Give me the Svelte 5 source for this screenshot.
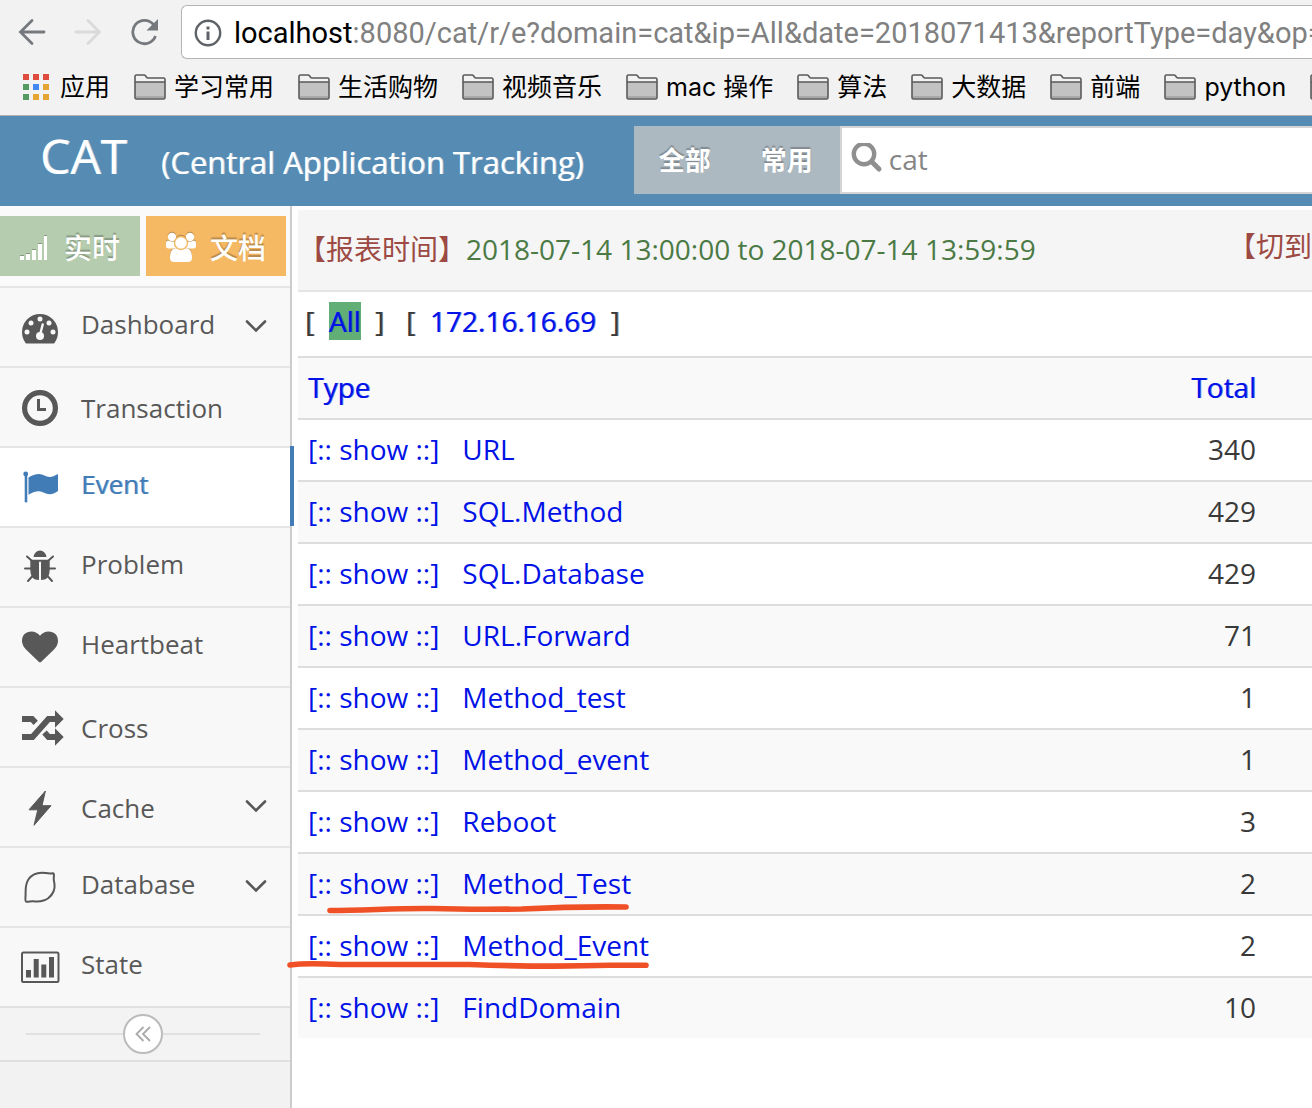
<script>
  const bookmarks = ['学习常用', '生活购物', '视频音乐', 'mac 操作', '算法', '大数据', '前端', 'python'];
  const appColors = ['red', 'red', 'red', 'green', 'blue', 'yellow', 'green', 'yellow', 'yellow'];

  const menu = [
    { name: 'Dashboard', icon: 'gauge', children: true },
    { name: 'Transaction', icon: 'clock', low: true },
    { name: 'Event', icon: 'flag', active: true },
    { name: 'Problem', icon: 'bug' },
    { name: 'Heartbeat', icon: 'heart' },
    { name: 'Cross', icon: 'shuffle', low: true },
    { name: 'Cache', icon: 'bolt', low: true, children: true },
    { name: 'Database', icon: 'leaf', children: true },
    { name: 'State', icon: 'chart' }
  ];

  const rows = [
    ['URL', 340],
    ['SQL.Method', 429],
    ['SQL.Database', 429],
    ['URL.Forward', 71],
    ['Method_test', 1],
    ['Method_event', 1],
    ['Reboot', 3],
    ['Method_Test', 2],
    ['Method_Event', 2],
    ['FindDomain', 10]
  ];
</script>

{#snippet folder()}
  <svg class="folder" width="32" height="26" viewBox="0 0 32 26" aria-hidden="true">
    <path d="M1 8h30v15.500a1.500 1.500 0 0 1-1.500 1.500h-27A1.500 1.500 0 0 1 1 23.500z" fill="#c2c2c2" />
    <path d="M2 22h28v2H2z" fill="#a9a9a9" />
    <path d="M1 8V2.500q0-1.500 1.500-1.500H10q1 0 1.500.8l1 1.400q.5.8 1.500.8h15.500q1.500 0 1.500 1.500V23.500q0 1.500-1.500 1.500h-27q-1.500 0-1.500-1.500zM1 8h30" fill="none" stroke="#5a5a5a" stroke-width="1.600" />
  </svg>
{/snippet}

{#snippet menuIcon(kind)}
  <svg class="menu-icon" width="48" height="44" viewBox="18 19 48 44" aria-hidden="true">
    {#if kind === 'gauge'}
      <path fill="currentColor" d="M25.500 57q-3.500-5-3.500-11a18 18 0 0 1 36 0q0 6-3.500 11-.5.5-1.200.5H26.700q-.7 0-1.200-.5z" />
      <g fill="#f8f8f8">
        <circle cx="27" cy="46" r="2.500" /><circle cx="31" cy="37" r="2.500" /><circle cx="40" cy="33" r="2.500" />
        <circle cx="49" cy="37" r="2.500" /><circle cx="53" cy="46" r="2.500" /><circle cx="40" cy="50" r="4" />
      </g>
      <path d="M40 49l2.700-10.500" stroke="#f8f8f8" stroke-width="2.400" stroke-linecap="round" />
    {:else if kind === 'clock'}
      <circle cx="40" cy="42" r="15.400" fill="none" stroke="currentColor" stroke-width="5.200" />
      <path fill="currentColor" d="M37 33h3v9h6v3h-9z" />
    {:else if kind === 'flag'}
      <circle cx="25.700" cy="28" r="2.400" fill="currentColor" />
      <path d="M26 28v27.300" stroke="currentColor" stroke-width="2.600" stroke-linecap="round" />
      <path fill="currentColor" d="M28.500 31.500q5-3.500 10.500-3.500c4 0 7 3 10.500 3 3.500 0 5.500-1.700 8.500-3v17c-2.500 1.500-5 3.200-8.500 3.200-4 0-7-3-10.500-3-4 0-7.500 1.800-10.500 3.500z" />
    {:else if kind === 'bug'}
      <path fill="currentColor" d="M33.700 31a6.300 6.500 0 0 1 12.600 0zM30.300 33.700h19.400V44q0 10-8.700 10V35.700h-2V54q-8.700 0-8.700-10z" />
      <path fill="none" stroke="currentColor" stroke-width="2" stroke-linecap="round" d="M27 30.500l4.500 4M53 30.500l-4.500 4M25 42.500h6M49 42.500h6M28 55l5-5.500M52 55l-5-5.500" />
    {:else if kind === 'heart'}
      <path fill="currentColor" d="M40 56.500q-.6 0-1-.4L26.500 44Q22 39.500 22 35c0-6 3.800-9.500 9.500-9.500 3.500 0 6.500 2 8.500 4.200 2-2.200 5-4.200 8.500-4.200 5.700 0 9.500 3.500 9.500 9.500q0 4.500-4.500 9L41 56.100q-.4.4-1 .4z" />
    {:else if kind === 'shuffle'}
      <g fill="none" stroke="currentColor" stroke-width="6">
        <path d="M22 33h10l3.700 3.800M22 51h10.500L48.500 33H56M44.500 46.500l4 4.500H56" />
      </g>
      <path fill="currentColor" d="M55 24.300l8.700 8.700-8.700 8.700zM55 42.300l8.700 8.700-8.700 8.700z" />
    {:else if kind === 'bolt'}
      <path fill="currentColor" stroke="currentColor" stroke-width="1" stroke-linejoin="round" d="M45.400 25L42 39.700h9L34 59.300 37.800 43.800H29z" />
    {:else if kind === 'leaf'}
      <path fill="none" stroke="currentColor" stroke-width="2" stroke-linejoin="round" d="M53 27.300q-4 .4-7-.2c-8-1.200-14 1.200-17.500 6.200-4 6-2.500 11-3 17.500-.2 2-.4 4.700 1 5 2 .4 4-.9 7-.6 5 .5 10 .8 15-3.200 5-4.200 6.500-10 6-14-.3-2.500-1-3.500-.7-6.500.1-2 .5-4.300-.8-4.200z" />
    {:else}
      <rect x="22" y="26.500" width="36.500" height="29.500" rx="1.500" fill="none" stroke="currentColor" stroke-width="2" />
      <path fill="currentColor" d="M26 44h5v7.500h-5zM33.700 33h5v18.500h-5zM41.300 38.500h5v13h-5zM49 31h5v20.500h-5z" />
    {/if}
  </svg>
{/snippet}

<div class="page">
  <div class="browser">
    <div class="toolbar">
      <button class="tool" aria-label="Back">
        <svg width="28" height="28" viewBox="0 0 28 28"><path d="M26 14H3M14 2.500L2.500 14 14 25.500" fill="none" stroke="#75787d" stroke-width="2.800" stroke-linecap="round" /></svg>
      </button>
      <button class="tool" aria-label="Forward" disabled>
        <svg width="28" height="28" viewBox="0 0 28 28"><path d="M2 14h23M14 2.500L25.500 14 14 25.500" fill="none" stroke="#d9dadb" stroke-width="2.800" stroke-linecap="round" /></svg>
      </button>
      <button class="tool" aria-label="Reload">
        <svg width="28" height="28" viewBox="0 0 28 28"><path d="M23.500 6.500A11.700 11.700 0 1 0 25.500 18" fill="none" stroke="#75787d" stroke-width="2.800" /><path d="M28 1v11.500H16.500z" fill="#75787d" /></svg>
      </button>
      <div class="address">
        <svg width="28" height="28" viewBox="0 0 28 28" aria-hidden="true"><circle cx="14" cy="14" r="12.200" fill="none" stroke="#5f6368" stroke-width="2.400" /><path d="M12.500 7.500h3v3h-3zM12.500 12.500h3V21h-3z" fill="#5f6368" /></svg>
        <label for="url">localhost</label>
        <input id="url" type="text" value=":8080/cat/r/e?domain=cat&ip=All&date=2018071413&reportType=day&op=view" />
      </div>
    </div>
    <nav class="bookmarks" aria-label="Bookmarks">
      <a href="#apps">
        <span class="apps">{#each appColors as color}<i class={color}></i>{/each}</span>应用
      </a>
      {#each bookmarks as name}
        <a href="#{name}">{@render folder()}{name}</a>
      {/each}
      <a href="#more" aria-label="More bookmarks">{@render folder()}</a>
    </nav>
  </div>

  <header>
    <h1>CAT</h1>
    <span class="tagline">(Central Application Tracking)</span>
    <div class="search">
      <button>全部</button>
      <button>常用</button>
      <label class="field">
        <svg width="32" height="32" viewBox="0 0 32 32" aria-hidden="true"><circle cx="13" cy="11" r="10.200" fill="none" stroke="#8f8f8f" stroke-width="4.400" /><path d="M20.500 18.500l7.500 7.500" stroke="#8f8f8f" stroke-width="5" stroke-linecap="round" /></svg>
        <input type="text" value="cat" aria-label="Domain" />
      </label>
    </div>
  </header>

  <div class="body">
    <aside>
      <div class="shortcuts">
        <button class="realtime">
          <svg width="32" height="32" viewBox="0 0 32 32" aria-hidden="true"><path fill="#fff" d="M2 24h4v4H2zM8 22h4v6H8zM14 18h4v10h-4zM20 12h4v16h-4zM26 4h3v24h-3z" /></svg>
          实时
        </button>
        <button class="docs">
          <svg width="32" height="32" viewBox="0 0 32 32" aria-hidden="true">
            <g fill="#fff">
              <circle cx="8" cy="5" r="4.200" /><circle cx="26" cy="5" r="4.200" />
              <path d="M2 11q0-2.500 2-2.500 4 2 8 1l1 7H5q-3 0-3-2.500zM32 11q0-2.500-2-2.500-4 2-8 1l-1 7h8q3 0 3-2.500z" />
              <path d="M6 26c0-6 2-9.500 5-9.500h12c3 0 5 3.500 5 9.500 0 3-2 4-4 4H10c-2 0-4-1-4-4z" />
              <circle cx="17" cy="11" r="6.500" stroke="#f5b863" stroke-width="1.400" />
            </g>
          </svg>
          文档
        </button>
      </div>
      <nav aria-label="Reports">
        {#each menu as item}
          <a href="#{item.name}" class:active={item.active} class:low={item.low}>
            {@render menuIcon(item.icon)}
            <span class="label">{item.name}</span>
            {#if item.children}
              <svg width="24" height="16" viewBox="0 0 24 16" aria-hidden="true"><path d="M3 2.500l9 9 9-9" fill="none" stroke="currentColor" stroke-width="2.600" stroke-linecap="round" /></svg>
            {/if}
          </a>
        {/each}
      </nav>
      <div class="collapse">
        <button aria-label="Collapse sidebar">
          <svg width="20" height="20" viewBox="0 0 20 20"><path d="M10.500 3L3.500 10l7 7M17 3l-7 7 7 7" fill="none" stroke="#aaa" stroke-width="1.800" /></svg>
        </button>
      </div>
    </aside>

    <main>
      <div class="report">
        <span class="red">【报表时间】</span>
        <span class="green">2018-07-14 13:00:00 to 2018-07-14 13:59:59</span>
        <span class="red mode">【切到</span>
      </div>
      <div class="ips">[&nbsp; <a class="current" href="#all">All</a> &nbsp;]&nbsp; &nbsp;[&nbsp; <a href="#ip">172.16.16.69</a> &nbsp;]</div>
      <table>
        <thead>
          <tr><th><a href="#type">Type</a></th><th class="num"><a href="#total">Total</a></th></tr>
        </thead>
        <tbody>
          {#each rows as [name, total]}
            <tr>
              <td><a class="show" href="#show-{name}">[:: show ::]</a><a href="#{name}">{name}</a></td>
              <td class="num">{total}</td>
            </tr>
          {/each}
        </tbody>
      </table>
      <svg class="marks" width="368" height="72" viewBox="0 0 368 72" aria-hidden="true">
        <g fill="none" stroke="#f05026" stroke-width="5.600" stroke-linecap="round" stroke-linejoin="round">
          <path d="M44 8.500C80 8.500 110 6 146 6.500c30 1 60 1 90 .5 30-1.500 60-2.500 104-2" />
          <path d="M4 63c10-1.500 30-1.500 50-.5h130c40 1.500 100 2 140 .8h36" />
        </g>
      </svg>
    </main>
  </div>
</div>

<style>
  :global(body) { margin: 0; }
  .page {
    min-height: 100vh;
    display: flex;
    flex-direction: column;
    overflow: hidden;
    background: #fff;
    font-family: 'Open Sans', 'Noto Sans CJK SC', sans-serif;
    font-size: 28px;
    line-height: 38px;
    color: #393939;
  }
  a { text-decoration: none; color: inherit; }
  button, input { font: inherit; border: 0; padding: 0; margin: 0; background: none; color: inherit; }
  svg { display: block; flex: none; }

  .browser { background: #f2f2f2; border-bottom: 1px solid #b0b0b0; }
  .toolbar { display: flex; align-items: center; gap: 28px; padding: 5px 0 0 18px; }
  .tool { flex: none; }
  .address {
    flex: 1;
    min-width: 0;
    display: flex;
    align-items: center;
    box-sizing: border-box;
    margin-left: -5px;
    height: 54px;
    padding: 2px 0 0 12px;
    border: 1px solid #b4b4b4;
    border-right: 0;
    border-radius: 6px 0 0 6px;
    background: #fff;
    font-family: Roboto, sans-serif;
    font-size: 29px;
    color: #000;
  }
  .address label { margin-left: 12px; }
  .address input { flex: 1; min-width: 0; color: #808080; }
  .bookmarks {
    display: flex;
    gap: 24px;
    padding: 0 0 0 22px;
    height: 56px;
    align-items: center;
    overflow: hidden;
    font-family: Inter, 'Noto Sans CJK SC', sans-serif;
    font-size: 25px;
    line-height: 32px;
    color: #000;
  }
  .bookmarks a { display: flex; align-items: center; gap: 8px; white-space: nowrap; flex: none; }
  .apps { display: grid; grid-template-columns: repeat(3, 6px); grid-auto-rows: 6px; gap: 4px; padding: 1px; margin-right: 2px; }
  .red { color: #9c4a43; }
  .apps .red { background: #e04b3f; }
  .apps .green { background: #539b5f; }
  .apps .blue { background: #4288f0; }
  .apps .yellow { background: #e5a535; }

  header { display: flex; height: 88px; padding: 0 0 2px 40px; background: #568cb4; color: #fff; align-items: center; }
  h1, .tagline, .active, .ips, th { text-shadow: 1px 0 color-mix(in srgb, currentColor 60%, transparent); }
  h1 { margin: 0; font-size: 48px; font-weight: 400; line-height: 64px; padding-bottom: 8px; }
  .tagline { margin-left: 34px; padding-top: 4px; font-size: 31px; line-height: 44px; white-space: nowrap; }
  .search { flex: 1; min-width: 0; display: flex; height: 68px; margin-left: 50px; background: #adb9c1; }
  .search button { width: 102px; font-size: 26px; font-weight: 700; color: #fff; text-shadow: 0 -2px 1px rgba(0, 0, 0, 0.25); }
  .search button + button { margin-right: 2px; }
  .field { flex: 1; min-width: 0; display: flex; align-items: center; gap: 6px; padding: 0 0 2px 9px; border: 2px solid #d5d5d5; border-right: 0; background: #fff; color: #858585; }
  .field input { flex: 1; min-width: 0; font-size: 28px; }

  .body { flex: 1; display: flex; }
  aside { flex: none; width: 290px; border-right: 2px solid #ccc; background: #f2f2f2; color: #585858; font-size: 26px; line-height: 36px; }
  .shortcuts { display: flex; gap: 6px; padding: 10px 4px 10px 0; background: #fafafa; }
  .shortcuts button {
    flex: 1;
    display: flex;
    align-items: center;
    gap: 14px;
    height: 60px;
    padding: 3px 0 0 18px;
    font-size: 28px;
    font-weight: 500;
    color: #fff;
    text-shadow: 0 -2px 1px rgba(0, 0, 0, 0.25);
  }
  .shortcuts svg { filter: drop-shadow(0 -1px 0 rgba(0, 0, 0, 0.25)); }
  .realtime { background: #b5cdae; }
  .docs { background: #f5b863; }
  aside nav a {
    position: relative;
    display: flex;
    align-items: center;
    height: 78px;
    padding: 0 22px 0 18px;
    border-top: 2px solid #e5e5e5;
    background: #f8f8f8;
  }
  .label { flex: 1; margin-left: 15px; padding-bottom: 6px; }
  .low .label { padding: 2px 0 0; }
  aside nav .active { background: #fff; color: #427cb7; }
  .active::after { content: ''; position: absolute; top: -2px; bottom: 0; right: -4px; width: 4px; background: #427cb7; }
  .collapse {
    display: flex;
    align-items: center;
    height: 52px;
    padding: 0 30px 0 26px;
    border: solid #e0e0e0;
    border-width: 2px 0;
    background: #f3f3f3;
  }
  .collapse::before, .collapse::after { content: ''; flex: 1; height: 2px; background: #e0e0e0; }
  .collapse button { display: flex; align-items: center; justify-content: center; width: 40px; height: 40px; border: 2px solid #bbb; border-radius: 50%; background: #fff; }

  main { position: relative; flex: 1; min-width: 0; padding: 4px 0 0 6px; }
  .report { display: flex; height: 80px; align-items: center; border-bottom: 2px solid #e5e5e5; background: #f5f5f5; white-space: nowrap; }
  .report span { padding-bottom: 2px; }
  .green { color: #4b7a45; }
  .report .mode { margin-left: auto; padding-bottom: 8px; }
  .ips { padding: 10px 7px 16px; white-space: nowrap; }
  main a { color: #0012e6; }
  .ips a, th a { text-shadow: 1px 0 rgba(0, 18, 230, 0.6); }
  main .current { display: inline-block; background: #62ae77; }
  table { width: 100%; border-collapse: separate; border-spacing: 0; }
  th, td { box-sizing: border-box; height: 62px; padding: 9px 10px 11px; border-top: 2px solid #ddd; text-align: left; }
  th { font-weight: 400; }
  thead tr, tbody tr:nth-child(even) { background: #f9f9f9; }
  .num { padding-right: 56px; text-align: right; }
  .show { margin-right: 23px; }
  .marks { position: absolute; left: -6px; top: 696px; }
</style>
